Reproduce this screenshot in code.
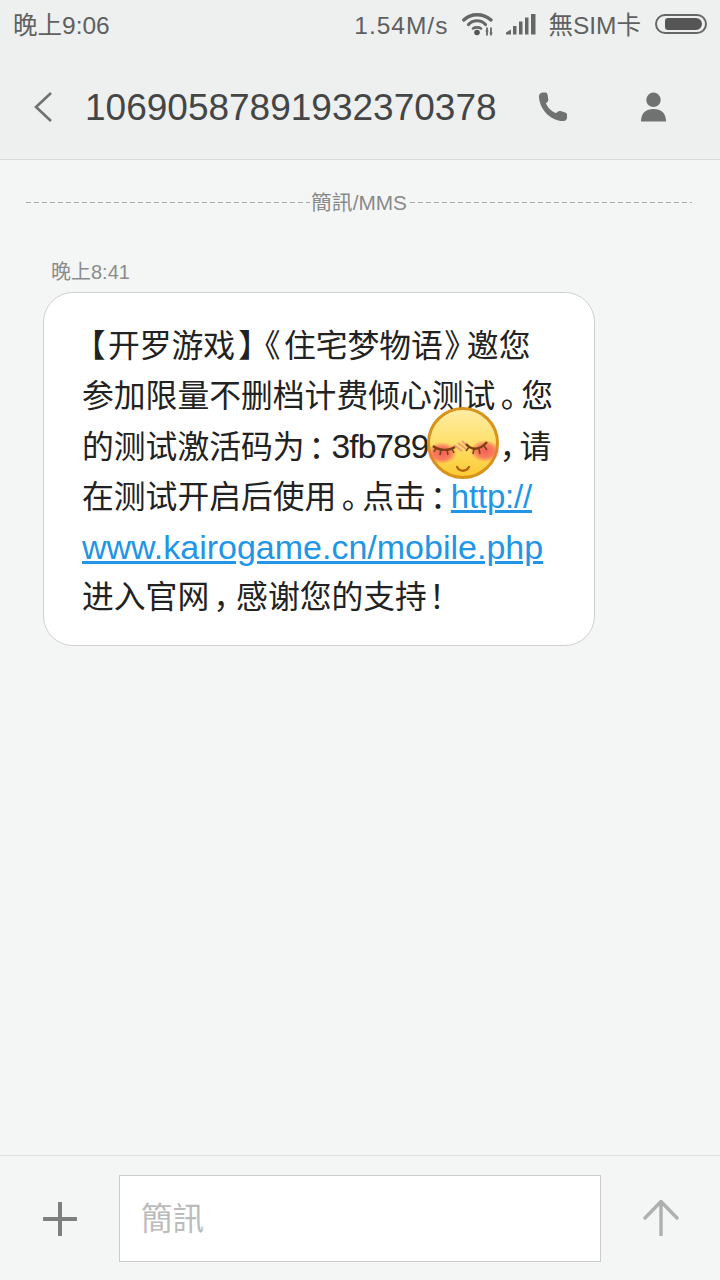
<template>
  <div class="page">
    <header class="top">
      <div class="status">
        <span class="clock">晚上9:06</span>
        <div class="status-right">
          <span class="speed">1.54M/s</span>
          <svg class="wifi" width="32" height="24" viewBox="0 0 32 24">
            <path d="M1.800 8C9 1 21 1 29 8" fill="none" stroke="#666" stroke-width="3.400" stroke-linecap="round"/>
            <path d="M6.500 12.500C11 7.500 19 7.500 23.500 12.500" fill="none" stroke="#666" stroke-width="3.200" stroke-linecap="round"/>
            <path d="M11 16.500C13 15 17 15 19 16.500" fill="none" stroke="#666" stroke-width="2.600" stroke-linecap="round"/>
            <circle cx="15" cy="20.500" r="2.800" fill="#555"/>
            <path d="M25 15.500v8M29 15.500v8" stroke="#666" stroke-width="1.800"/>
            <path d="M23.500 19h3M27.500 21h3" stroke="#666" stroke-width="1"/>
          </svg>
          <svg class="signal" width="30" height="21" viewBox="0 0 30 21">
            <path d="M0 18.500 L5 15.500V20.500H0Z" fill="#666"/>
            <rect x="7" y="12" width="3.500" height="8.500" fill="#666"/>
            <rect x="13" y="7.500" width="3.500" height="13" fill="#666"/>
            <rect x="19" y="3.500" width="3.500" height="17" fill="#666"/>
            <rect x="25" y="0" width="4.500" height="20.500" fill="#666"/>
          </svg>
          <span class="sim">無SIM卡</span>
          <div class="battery"><div class="battery-fill"></div></div>
        </div>
      </div>
      <div class="title-bar">
        <svg class="back" width="20" height="32" viewBox="0 0 20 32">
          <path d="M17 2 L2 16 L17 30" fill="none" stroke="#6f7171" stroke-width="2.600"/>
        </svg>
        <h1 class="number">10690587891932370378</h1>
        <svg class="phone" width="30" height="30" viewBox="0 0 32 32">
          <path d="M1 4.500C1 2 3 0.500 5.500 0.500H8C9.500 0.500 10 1.500 10.200 3L11 8C11.200 9.300 10.600 10.200 9.600 11L8.500 12C9.500 15.500 14.500 21 19.500 22.500L21 21C22 20.200 23 20 24 20.300L29 21.800C30.500 22.300 31 23 31 24.500V27C31 29.500 29.500 31 27 31C12.500 30.500 1.500 18 1 4.500Z" fill="#707272"/>
        </svg>
        <svg class="person" width="25" height="30" viewBox="0 0 26 30">
          <circle cx="13" cy="7.500" r="7.500" fill="#707272"/>
          <path d="M0 30C0 21 5 17 13 17S26 21 26 30Z" fill="#707272"/>
        </svg>
      </div>
    </header>

    <main class="thread">
      <div class="divider"><span class="divider-text">簡訊/MMS</span></div>
      <div class="time">晚上8:41</div>
      <div class="bubble">
        <div class="line"><span class="lb">【</span>开罗游戏<span class="rb">】</span><span class="la">《</span>住宅梦物语<span class="ra">》</span>邀您</div>
        <div class="line">参加限量不删档计费倾心测试<span class="stop">。</span>您</div>
        <div class="line">的测试激活码为<span class="colon">：</span><span class="code">3fb789</span><span class="emoji-slot"><svg class="emoji" width="72" height="72" viewBox="0 0 72 72">
          <defs>
            <linearGradient id="face" x1="0" y1="0" x2="0" y2="1">
              <stop offset="0" stop-color="#feeda6"/>
              <stop offset="0.5" stop-color="#fee06a"/>
              <stop offset="1" stop-color="#fcc932"/>
            </linearGradient>
            <radialGradient id="blush">
              <stop offset="0" stop-color="#f8505c" stop-opacity="0.9"/>
              <stop offset="0.6" stop-color="#f8605c" stop-opacity="0.75"/>
              <stop offset="1" stop-color="#f9625f" stop-opacity="0"/>
            </radialGradient>
          </defs>
          <circle cx="36" cy="36" r="34.500" fill="url(#face)" stroke="#d8941a" stroke-width="3"/>
          <ellipse cx="15" cy="46" rx="15" ry="11" fill="url(#blush)"/>
          <ellipse cx="58" cy="44" rx="15" ry="11" fill="url(#blush)"/>
          <path d="M27 38l8 6M31 36l8 6M35 34l7 6" stroke="#f58a7c" stroke-width="2" opacity=".8"/>
          <path d="M6 39C12 44 22 44 28 40" fill="none" stroke="#7a3f14" stroke-width="2.400"/>
          <path d="M39 37C45 44 53 43 60 35" fill="none" stroke="#7a3f14" stroke-width="2.400"/>
          <path d="M9 41l-2 4M14 43l-1 5M20 43l1 5M25 42l2 4M42 40l-3 4M47 42l-1 5M52 42l1 5M57 39l3 4" stroke="#7a3f14" stroke-width="1.600"/>
          <path d="M30 60C33 65 39 65 42 60" fill="none" stroke="#b5600f" stroke-width="2.400" stroke-linecap="round"/>
        </svg></span><span class="comma-a">，</span>请</div>
        <div class="line">在测试开启后使用<span class="stop">。</span>点击<span class="colon-b">：</span><a class="link link-short">http://</a></div>
        <div class="line"><a class="link link-long">www.kairogame.cn/mobile.php</a></div>
        <div class="line">进入官网<span class="comma-b">，</span>感谢您的支持<span class="bang">！</span></div>
      </div>
    </main>

    <footer class="composer">
      <svg class="plus" width="34" height="34" viewBox="0 0 34 34">
        <path d="M17 1V33M1 17H33" stroke="#7d7f7f" stroke-width="4" stroke-linecap="round"/>
      </svg>
      <div class="input">簡訊</div>
      <svg class="send" width="36" height="36" viewBox="0 0 36 36">
        <path d="M18 2V35M2 18L18 1.500L34 18" fill="none" stroke="#aeb0b0" stroke-width="3.400" stroke-linecap="round" stroke-linejoin="round"/>
      </svg>
    </footer>
  </div>
</template>

<style>
html, body { margin: 0; padding: 0; }
</style>

<style scoped>
.page {
  width: 720px;
  height: 1280px;
  display: flex;
  flex-direction: column;
  background: #f4f6f6;
  font-family: "Liberation Sans", "Noto Sans CJK SC", sans-serif;
  font-feature-settings: "palt";
  overflow: hidden;
}
.top {
  height: 160px;
  box-sizing: border-box;
  background: #eef0f0;
  border-bottom: 1px solid #d8dada;
}
.status {
  height: 52px;
  display: flex;
  align-items: center;
  justify-content: space-between;
  padding: 0 13px 4px 13px;
  color: #5e6060;
  font-size: 24.500px;
  line-height: 30px;
}
.clock, .speed, .sim { height: 30px; }
.status-right { display: flex; align-items: center; }
.speed { margin-right: 14px; letter-spacing: 1px; }
.wifi { margin: 0 12px 4px 0; }
.signal { margin: 0 12px 4px 0; }
.battery {
  width: 52px;
  height: 20px;
  margin: 0 0 4px 14px;
  box-sizing: border-box;
  border: 2px solid #666;
  border-radius: 10px;
  padding: 2px 3px 2px 8px;
}
.battery-fill { height: 100%; background: #555; border-radius: 3px 6px 6px 3px; }
.title-bar {
  height: 102px;
  display: flex;
  align-items: center;
  padding: 0 54px 0 34px;
}
.number {
  flex: 1;
  margin: 2px 0 0 31px;
  font-size: 37px;
  font-weight: 400;
  color: #444646;
}
.person { margin-left: 73px; }
.thread { flex: 1; padding-top: 20px; min-height: 0; }
.divider {
  margin: 0 28px 0 26px;
  height: 46px;
  display: flex;
  align-items: center;
  justify-content: center;
  background: repeating-linear-gradient(90deg, #a8aaaa 0 5px, transparent 5px 8px) 0 22px / 100% 1px no-repeat;
}
.divider-text { background: #f4f6f6; padding: 0 1px; font-size: 20.800px; line-height: 24px; color: #888a8a; }
.time { margin: 27px 0 0 51px; height: 39px; font-size: 20px; line-height: 38px; color: #8a8c8c; }
.bubble {
  width: 552px;
  height: 354px;
  margin: 0 0 0 43px;
  box-sizing: border-box;
  padding: 28px 0 0 38px;
  background: #fff;
  border: 1px solid #cfd1d1;
  border-radius: 30px;
  font-size: 31.800px;
  line-height: 50.300px;
  color: #222;
}
.line { white-space: nowrap; height: 50.300px; }
.lb { margin: 0 3px 0 7px; }
.rb { margin: 0 4px 0 4px; }
.la { margin: 0 4px 0 5px; }
.ra { margin: 0 6px 0 2px; }
.stop { margin: 0 5px 0 5px; }
.colon { margin: 0 7px 0 4px; }
.colon-b { margin: 0 5px 0 4px; }
.comma-a { margin: 0 2px 0 2px; }
.comma-b { margin: 0 5px 0 6px; }
.bang { margin-left: 2px; }
.code { font-size: 33.500px; letter-spacing: -0.900px; }
.emoji-slot { position: relative; display: inline-block; width: 71px; height: 1px; }
.emoji { position: absolute; left: -2px; top: -50px; }
.link { color: #2196e6; text-decoration: underline; }
.link-short { font-size: 33px; letter-spacing: -0.200px; }
.link-long { font-size: 34px; }
.composer {
  height: 125px;
  box-sizing: border-box;
  border-top: 1px solid #dfe1e1;
  display: flex;
  align-items: center;
  padding: 0 0 0 43px;
}
.plus { margin-top: 1px; }
.input {
  width: 482px;
  height: 87px;
  margin-left: 42px;
  box-sizing: border-box;
  border: 1px solid #ccc;
  background: #fff;
  padding-left: 21px;
  font-size: 31.500px;
  line-height: 87px;
  color: #bbb;
}
.send { margin-left: 42px; }
</style>
